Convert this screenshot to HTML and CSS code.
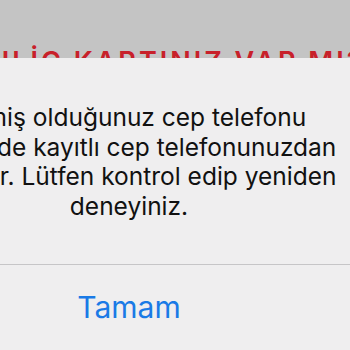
FILE: index.html
```html
<!DOCTYPE html>
<html lang="tr">
<head>
<meta charset="utf-8">
<link rel="stylesheet" href="styles.css">
</head>
<body>
<div class="screen">
  <div class="banner">ONLİÇ KARTINIZ VAR MI?</div>
  <div class="alert">
    <p class="message">Girmiş olduğunuz cep telefonu<br>sistemde kayıtlı cep telefonunuzdan<br>farklıdır. Lütfen kontrol edip yeniden<br>deneyiniz.</p>
    <div class="actions">
      <button class="action">Tamam</button>
    </div>
  </div>
</div>
</body>
</html>
```
FILE: styles.css
```css
html, body {
  margin: 0;
  padding: 0;
}
body {
  width: 350px;
  height: 350px;
  overflow: hidden;
  background: #c4c4c4;
  font-family: Inter, "Noto Sans", sans-serif;
}
.screen {
  position: relative;
  width: 350px;
  height: 350px;
  overflow: hidden;
}
.banner {
  position: absolute;
  top: 48px;
  left: -35px;
  white-space: nowrap;
  color: #c8202a;
  font-family: Inter, sans-serif;
  font-weight: 600;
  font-size: 27px;
  line-height: 27px;
  letter-spacing: 3px;
}
.alert {
  position: absolute;
  left: -141px;
  top: 58px;
  width: 540px;
  height: 320px;
  background: #efeeef;
}
.message {
  margin: 0;
  padding-top: 45px;
  text-align: center;
  color: #111;
  font-size: 24.5px;
  line-height: 29.5px;
  box-sizing: border-box;
  height: 206px;
}
.actions {
  border-top: 1px solid #c6c5c7;
  padding-top: 25px;
  text-align: center;
}
.action {
  border: 0;
  background: none;
  padding: 0;
  font-family: Inter, sans-serif;
  font-size: 30px;
  line-height: 34px;
  color: #1a7ae6;
}
```
